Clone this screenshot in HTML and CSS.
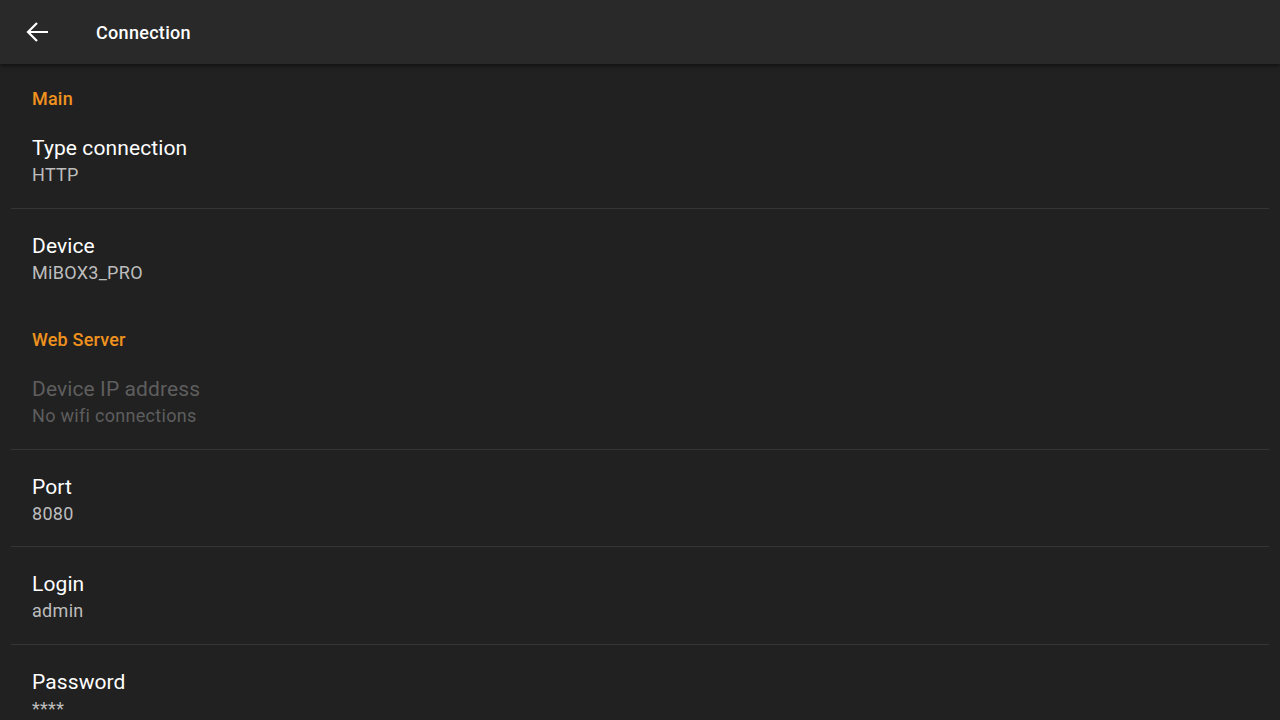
FILE: index.html
```html
<!DOCTYPE html>
<html>
<head>
    <title>Connection</title>
    <link rel="stylesheet" href="styles.css">
</head>
<body>
    <header class="toolbar">
        <button class="back" aria-label="Back">
            <svg width="24" height="24" viewBox="0 0 24 24">
                <path d="M23 12H3.5 M12 3L3 12l9 9" fill="none" stroke="#fff" stroke-width="2.2"/>
            </svg>
        </button>
        <h1 class="toolbar-title">Connection</h1>
    </header>

    <main class="prefs">
        <div class="category">Main</div>
        <div class="pref">
            <div class="pref-title">Type connection</div>
            <div class="pref-summary">HTTP</div>
        </div>
        <div class="divider"></div>
        <div class="pref">
            <div class="pref-title">Device</div>
            <div class="pref-summary">MiBOX3_PRO</div>
        </div>

        <div class="category">Web Server</div>
        <div class="pref disabled">
            <div class="pref-title">Device IP address</div>
            <div class="pref-summary">No wifi connections</div>
        </div>
        <div class="divider"></div>
        <div class="pref">
            <div class="pref-title">Port</div>
            <div class="pref-summary">8080</div>
        </div>
        <div class="divider"></div>
        <div class="pref">
            <div class="pref-title">Login</div>
            <div class="pref-summary">admin</div>
        </div>
        <div class="divider"></div>
        <div class="pref">
            <div class="pref-title">Password</div>
            <div class="pref-summary">****</div>
        </div>
    </main>
</body>
</html>
```

FILE: styles.css
```css
body {
    font-family: Roboto, 'Liberation Sans', sans-serif;
    background-color: #212121;
    margin: 0;
    color: #fff;
    overflow: hidden;
}

.toolbar {
    display: flex;
    align-items: center;
    height: 64px;
    background-color: #292929;
    box-shadow: 0 2px 4px rgba(0, 0, 0, 0.5);
    position: relative;
}

.back {
    display: flex;
    align-items: center;
    justify-content: center;
    width: 24px;
    height: 24px;
    margin-left: 25px;
    padding: 0;
    border: none;
    background: none;
}

.toolbar-title {
    margin: 0 0 0 47px;
    font-size: 18px;
    font-weight: 500;
    letter-spacing: 0.3px;
    color: #fff;
}

.category {
    padding: 25px 32px 2px;
    height: 20px;
    line-height: 20px;
    font-size: 18px;
    font-weight: 500;
    letter-spacing: 0.2px;
    color: #f0921e;
}

.pref {
    padding: 24px 32px 18.5px;
}

.pref-title {
    font-size: 21px;
    line-height: 26px;
    letter-spacing: 0.1px;
    color: #fff;
}

.pref-summary {
    font-size: 18px;
    line-height: 28px;
    letter-spacing: 0.3px;
    color: #bdbdbd;
}

.pref.disabled .pref-title,
.pref.disabled .pref-summary {
    color: #5e5e5e;
}

.divider {
    height: 1px;
    margin: 0 11px;
    background-color: #353535;
}
```
